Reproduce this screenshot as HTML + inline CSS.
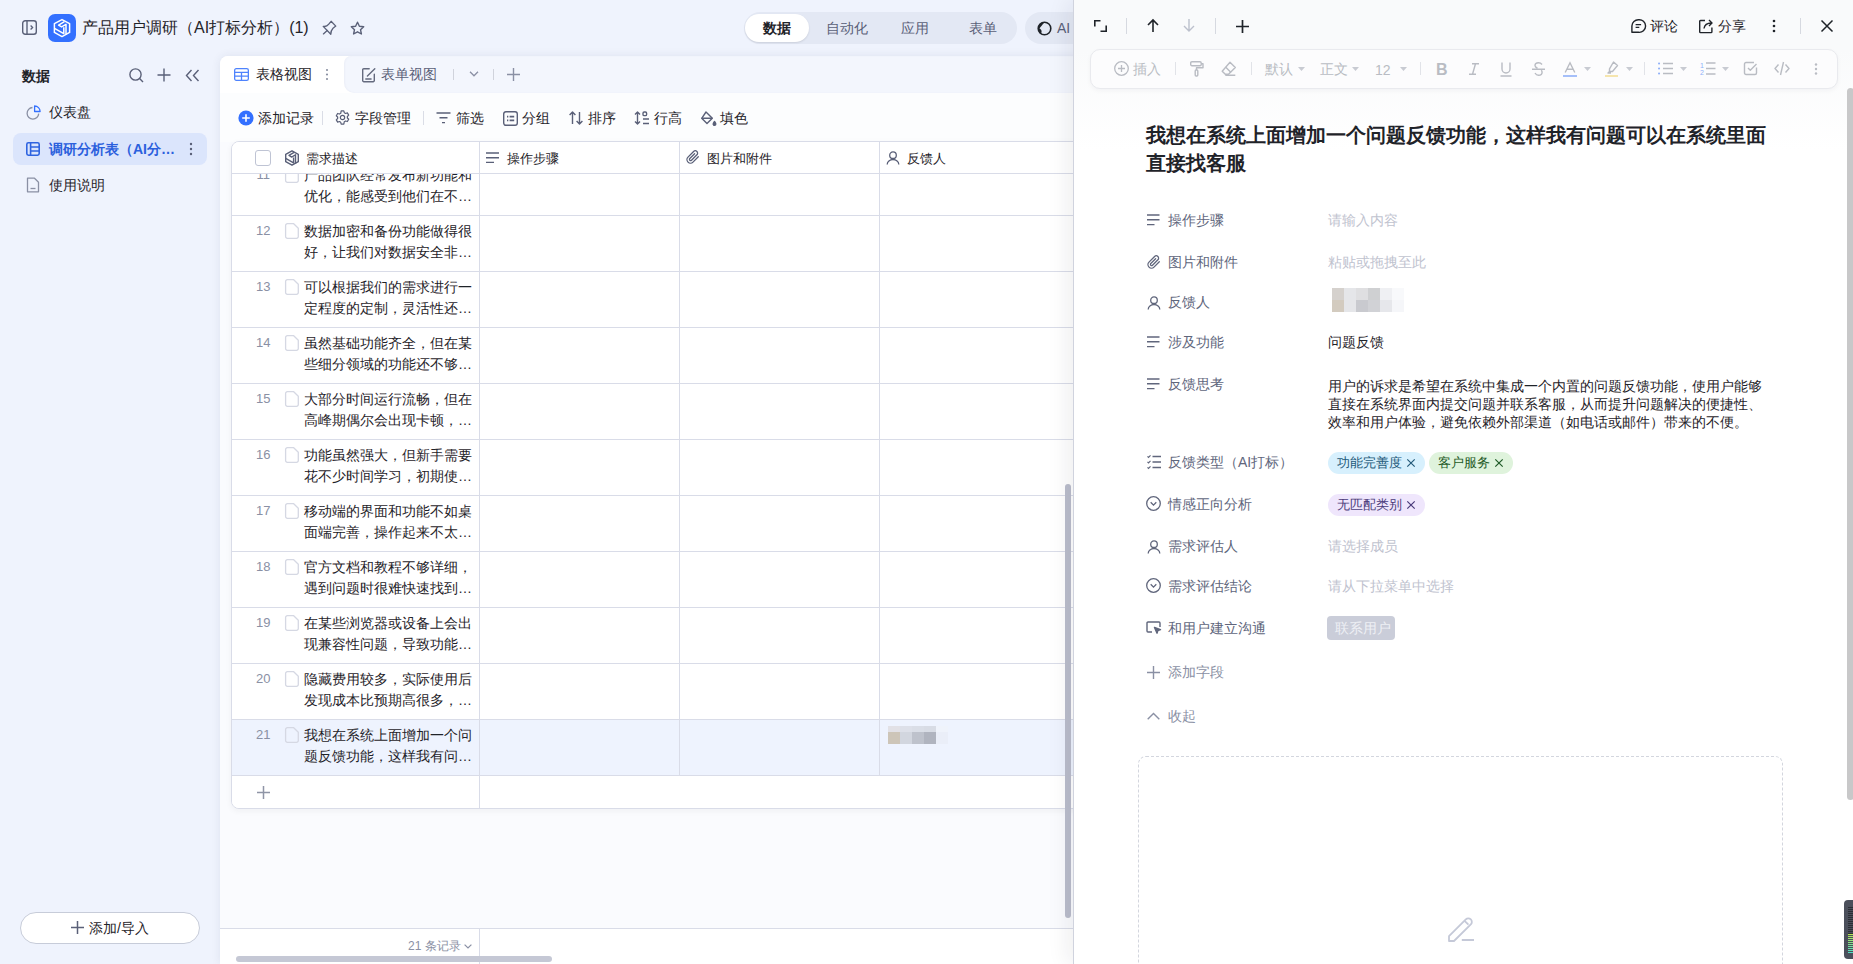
<!DOCTYPE html>
<html><head><meta charset="utf-8">
<style>
*{margin:0;padding:0;box-sizing:border-box}
html,body{width:1853px;height:964px;overflow:hidden}
body{font-family:"Liberation Sans",sans-serif;background:#eff3fd;color:#1f2329;position:relative;font-size:14px}
.a{position:absolute}
svg{position:absolute;overflow:visible}
.t{position:absolute;white-space:nowrap;line-height:1}
i{font-style:normal;display:inline-block;width:1em}
</style></head><body>

<!-- ================= TOP BAR ================= -->
<svg style="left:22px;top:20px" width="15" height="15" viewBox="0 0 15 15" fill="none" stroke="#5a6078" stroke-width="1.4"><rect x="0.7" y="0.7" width="13.6" height="13.6" rx="2.5"/><line x1="5" y1="1" x2="5" y2="14"/><path d="M8.6 5.5l2 2-2 2" stroke-width="1.3"/></svg>
<div class="a" style="left:48px;top:14px;width:28px;height:28px;border-radius:7px;background:#3370ff"></div>
<svg style="left:54px;top:19px" width="16" height="18" viewBox="0 0 16 18" fill="none" stroke="#fff" stroke-width="1.5" stroke-linejoin="round"><path d="M8 .6L15.6 4.6V13.4L8 17.6.4 13.4V4.6z"/><path d="M10.4 2.6L4.6 6.1 7.6 7.9 12 5.3V15.8"/><path d="M.5 9.4L9.8 14.6V8.3"/></svg>
<div class="t" style="left:82px;top:20px;font-size:16px;color:#1f2329"><i>产</i><i>品</i><i>用</i><i>户</i><i>调</i><i>研</i><i>（</i>AI<i>打</i><i>标</i><i>分</i><i>析</i><i>）</i>(1)</div>
<svg style="left:322px;top:20px" width="15" height="16" viewBox="0 0 15 16" fill="none" stroke="#5a6078" stroke-width="1.3" stroke-linejoin="round" stroke-linecap="round"><path d="M1.2 6.4Q4.6 7 6.8 4.2L9.1 1.3 13.8 6.1 11 8.2Q8.6 10.8 8.8 14.3z"/><path d="M5.2 10.4L1.4 13.9"/></svg>
<svg style="left:349.5px;top:20.5px" width="15" height="15" viewBox="0 0 15 15" fill="none" stroke="#5a6078" stroke-width="1.4" stroke-linejoin="round"><path d="M7.5 1.2l1.9 4 4.3.5-3.2 3 .9 4.3-3.9-2.2-3.9 2.2.9-4.3-3.2-3 4.3-.5z"/></svg>

<!-- segmented -->
<div class="a" style="left:744px;top:12px;width:273px;height:32px;border-radius:16px;background:#e3e8f4"></div>
<div class="a" style="left:745px;top:14px;width:64px;height:28px;border-radius:14px;background:#fff;box-shadow:0 1px 2px rgba(31,35,41,.12)"></div>
<div class="t" style="left:763px;top:21px;font-size:14px;font-weight:bold;color:#1f2329"><i>数</i><i>据</i></div>
<div class="t" style="left:826px;top:21px;font-size:14px;color:#5a6078"><i>自</i><i>动</i><i>化</i></div>
<div class="t" style="left:901px;top:21px;font-size:14px;color:#5a6078"><i>应</i><i>用</i></div>
<div class="t" style="left:969px;top:21px;font-size:14px;color:#5a6078"><i>表</i><i>单</i></div>
<div class="a" style="left:1025px;top:12px;width:80px;height:32px;border-radius:16px;background:#e3e8f4"></div>
<svg style="left:1037px;top:21px" width="15" height="15" viewBox="0 0 15 15"><circle cx="7.5" cy="7.5" r="6.3" fill="none" stroke="#1f2329" stroke-width="1.6"/><path d="M7.5 1.2A6.3 6.3 0 0 0 4 12.7C5.5 10 4 8 2.5 7.5 3.5 6 5 4 7.5 1.2z" fill="#1f2329"/></svg>
<div class="t" style="left:1057px;top:21px;font-size:14px;color:#5a6078">AI</div>

<!-- ================= SIDEBAR ================= -->

<div class="t" style="left:22px;top:69px;font-size:14px;font-weight:bold;color:#1f2329"><i>数</i><i>据</i></div>
<svg style="left:129px;top:68px" width="15" height="15" viewBox="0 0 15 15" fill="none" stroke="#5a6078" stroke-width="1.4"><circle cx="6.5" cy="6.5" r="5.6"/><path d="M10.6 10.6l3.4 3.4"/></svg>
<svg style="left:157px;top:68px" width="14" height="14" viewBox="0 0 14 14" fill="none" stroke="#5a6078" stroke-width="1.4"><path d="M7 0.5v13M0.5 7h13"/></svg>
<svg style="left:185px;top:69px" width="15" height="13" viewBox="0 0 15 13" fill="none" stroke="#5a6078" stroke-width="1.4"><path d="M6.5 1L1.5 6.5l5 5.5M13.5 1l-5 5.5 5 5.5"/></svg>

<svg style="left:26px;top:105px" width="15" height="15" viewBox="0 0 15 15" fill="none" stroke="#8a90a4" stroke-width="1.3" stroke-linejoin="round"><path d="M6.5 2.5A5.8 5.8 0 1 0 12.7 8.6"/><path d="M8.6 1v5.5h5.5A5.5 5.5 0 0 0 8.6 1z" stroke="#3370ff"/></svg>
<div class="t" style="left:49px;top:105px;font-size:14px;color:#1f2329"><i>仪</i><i>表</i><i>盘</i></div>

<div class="a" style="left:13px;top:133px;width:194px;height:32px;border-radius:8px;background:#dbe5fc"></div>
<svg style="left:26px;top:142px" width="14" height="14" viewBox="0 0 14 14" fill="none" stroke="#2f64e0" stroke-width="1.6" stroke-linejoin="round"><rect x="0.8" y="0.8" width="12.4" height="12.4" rx="1.6"/><path d="M4.6 1v12M4.6 5h8.4M4.6 9h8.4"/></svg>
<div class="t" style="left:49px;top:142px;font-size:14px;font-weight:bold;color:#2b60dd"><i>调</i><i>研</i><i>分</i><i>析</i><i>表</i><i>（</i>AI<i>分</i>…</div>
<svg style="left:189px;top:142px" width="4" height="14" viewBox="0 0 4 14" fill="#5a6078"><circle cx="2" cy="2" r="1.2"/><circle cx="2" cy="7" r="1.2"/><circle cx="2" cy="12" r="1.2"/></svg>

<svg style="left:26px;top:177px" width="14" height="16" viewBox="0 0 14 16" fill="none" stroke="#8a90a4" stroke-width="1.3" stroke-linejoin="round"><path d="M1.5 1.2h7l4 4v9.6h-11z"/><path d="M4.5 11.5h5"/></svg>
<div class="t" style="left:49px;top:178px;font-size:14px;color:#1f2329"><i>使</i><i>用</i><i>说</i><i>明</i></div>

<div class="a" style="left:20px;top:912px;width:180px;height:32px;border-radius:16px;background:#fff;border:1px solid #c7ccd9"></div>
<svg style="left:71px;top:921px" width="13" height="13" viewBox="0 0 13 13" fill="none" stroke="#5a6078" stroke-width="1.5"><path d="M6.5 0v13M0 6.5h13"/></svg>
<div class="t" style="left:89px;top:921px;font-size:14px;color:#1f2329"><i>添</i><i>加</i>/<i>导</i><i>入</i></div>

<div id="main" class="a" style="left:220px;top:56px;width:900px;height:908px;background:#fafbfe;border-top-left-radius:8px;overflow:hidden;box-shadow:0 0 10px rgba(40,50,90,.09)">
<div class="a" style="left:0;top:36px;width:900px;height:50px;background:#fcfdfe"></div>
<div class="a" style="left:0;top:0;width:900px;height:37px;background:#fff"></div>
<div class="a" style="left:124px;top:0;width:800px;height:37px;background:#f3f6fd;border-radius:7px 0 0 10px;box-shadow:inset 1px 0 2px rgba(40,50,90,.04)"></div>
<svg style="left:14px;top:12px" width="15" height="13" viewBox="0 0 15 13" fill="none" stroke="#4e83fd" stroke-width="1.3"><rect x="0.65" y="0.65" width="13.7" height="11.7" rx="1.6"/><path d="M1 4.4h13M1 8.2h13M7.5 4.4v8"/></svg>
<div class="t" style="left:36px;top:11px;font-size:14px;color:#1f2329"><i>表</i><i>格</i><i>视</i><i>图</i></div>
<svg style="left:105px;top:12px" width="4" height="13" viewBox="0 0 4 13" fill="#8a90a2"><circle cx="2" cy="2" r="1.1"/><circle cx="2" cy="6.5" r="1.1"/><circle cx="2" cy="11" r="1.1"/></svg>
<svg style="left:141.5px;top:11.5px" width="14" height="15" viewBox="0 0 14 15" fill="none" stroke="#646a7e" stroke-width="1.4" stroke-linejoin="round" stroke-linecap="round"><path d="M7.2 .7H1.8a1.1 1.1 0 0 0-1.1 1.1v10.8a1.1 1.1 0 0 0 1.1 1.1h9.4a1.1 1.1 0 0 0 1.1-1.1V6.2"/><path d="M12.8.7L5.4 8.1M3.8 11h5.3"/></svg>
<div class="t" style="left:161px;top:11px;font-size:14px;color:#5a6078"><i>表</i><i>单</i><i>视</i><i>图</i></div>
<div class="a" style="left:233px;top:13px;width:1px;height:11px;background:#d0d3dc"></div>
<svg style="left:249px;top:15px" width="10" height="6" viewBox="0 0 10 6" fill="none" stroke="#8a90a4" stroke-width="1.3"><path d="M1 .8l4 4 4-4"/></svg>
<div class="a" style="left:273px;top:13px;width:1px;height:11px;background:#d0d3dc"></div>
<svg style="left:287px;top:12px" width="13" height="13" viewBox="0 0 13 13" fill="none" stroke="#8a90a4" stroke-width="1.4"><path d="M6.5 0v13M0 6.5h13"/></svg>
<svg style="left:18px;top:54px" width="16" height="16" viewBox="0 0 16 16"><circle cx="8" cy="8" r="7.6" fill="#3370ff"/><path d="M8 4.2v7.6M4.2 8h7.6" stroke="#fff" stroke-width="1.6"/></svg>
<div class="t" style="left:38px;top:55px;font-size:14px;color:#1f2329"><i>添</i><i>加</i><i>记</i><i>录</i></div>
<div class="a" style="left:102px;top:55px;width:1px;height:14px;background:#dadde6"></div>
<svg style="left:115px;top:54px" width="15" height="15" viewBox="0 0 16 16" fill="none" stroke="#5a6078" stroke-width="1.3" stroke-linejoin="round"><path d="M6.6 1h2.8l.5 1.9 1.4.8 1.9-.6 1.4 2.4-1.4 1.4v1.6l1.4 1.4-1.4 2.4-1.9-.6-1.4.8L9.4 15H6.6l-.5-1.9-1.4-.8-1.9.6L1.4 10.5l1.4-1.4V7.5L1.4 6.1l1.4-2.4 1.9.6 1.4-.8z"/><circle cx="8" cy="8" r="2.3"/></svg>
<div class="t" style="left:135px;top:55px;font-size:14px;color:#1f2329"><i>字</i><i>段</i><i>管</i><i>理</i></div>
<div class="a" style="left:203px;top:55px;width:1px;height:14px;background:#dadde6"></div>
<svg style="left:216px;top:56px" width="15" height="12" viewBox="0 0 15 12" fill="none" stroke="#5a6078" stroke-width="1.4"><path d="M.5 1h14M3.5 5.8h8M6 10.6h3"/></svg>
<div class="t" style="left:236px;top:55px;font-size:14px;color:#1f2329"><i>筛</i><i>选</i></div>
<svg style="left:282.5px;top:54.5px" width="15" height="15" viewBox="0 0 15 15" fill="none" stroke="#5a6078" stroke-width="1.4"><rect x="0.7" y="0.7" width="13.6" height="13.6" rx="2.2"/><path d="M4 5.6h1.3M6.6 5.6h4.6M4 9.4h1.3M6.6 9.4h4.6" stroke-width="1.6"/></svg>
<div class="t" style="left:302px;top:55px;font-size:14px;color:#1f2329"><i>分</i><i>组</i></div>
<svg style="left:349px;top:55px" width="14" height="14" viewBox="0 0 14 14" fill="none" stroke="#5a6078" stroke-width="1.4" stroke-linejoin="round"><path d="M3.5 13V1M.6 4l2.9-3 2.9 3M10.5 1v12M7.6 10l2.9 3 2.9-3"/></svg>
<div class="t" style="left:368px;top:55px;font-size:14px;color:#1f2329"><i>排</i><i>序</i></div>
<svg style="left:414px;top:55px" width="16" height="14" viewBox="0 0 16 14" fill="none" stroke="#5a6078" stroke-width="1.4" stroke-linejoin="round"><path d="M3.5 1v12M1 3.5L3.5 1 6 3.5M1 10.5L3.5 13 6 10.5"/><rect x="9" y="1" width="3.6" height="3.6" rx="1.2"/><path d="M9 8h6M9 12.5h6"/></svg>
<div class="t" style="left:434px;top:55px;font-size:14px;color:#1f2329"><i>行</i><i>高</i></div>
<svg style="left:480px;top:55px" width="17" height="15" viewBox="0 0 17 15" fill="none" stroke="#5a6078" stroke-width="1.4" stroke-linejoin="round"><path d="M6 1l6.3 6.3-5.3 5.3L1.7 7.3z"/><path d="M1.7 7.3h10.6"/><path d="M14.5 10.5c.9 1.2 1.3 2 1.3 2.6a1.3 1.3 0 0 1-2.6 0c0-.6.4-1.4 1.3-2.6z" fill="#5a6078"/></svg>
<div class="t" style="left:500px;top:55px;font-size:14px;color:#1f2329"><i>填</i><i>色</i></div>
<div class="a" style="left:11px;top:85px;width:1000px;height:668px;background:#fff;border:1px solid #d9dce8;border-radius:8px;box-shadow:0 2px 6px rgba(31,35,41,.05);overflow:hidden">
<div class="a" style="left:0;top:18px;width:1000px;height:56px;background:#fff;border-bottom:1px solid #d9dce8"></div>
<div class="t" style="left:24px;top:26px;width:14px;text-align:right;font-size:13px;color:#8a90a4">11</div>
<svg style="left:53px;top:25px" width="14" height="16" viewBox="0 0 14 16" fill="none" stroke="#d5d8e3" stroke-width="1.3" stroke-linejoin="round"><path d="M2.4 .7h6.3l4.6 4.6v8.2a1.8 1.8 0 0 1-1.8 1.8H2.4A1.8 1.8 0 0 1 .6 13.5V2.5A1.8 1.8 0 0 1 2.4.7z"/></svg>
<div class="a" style="left:72px;top:23px;font-size:14px;line-height:21px;color:#1f2329;white-space:nowrap"><i>产</i><i>品</i><i>团</i><i>队</i><i>经</i><i>常</i><i>发</i><i>布</i><i>新</i><i>功</i><i>能</i><i>和</i><br><i>优</i><i>化</i><i>，</i><i>能</i><i>感</i><i>受</i><i>到</i><i>他</i><i>们</i><i>在</i><i>不</i>…</div>
<div class="a" style="left:0;top:74px;width:1000px;height:56px;background:#fff;border-bottom:1px solid #d9dce8"></div>
<div class="t" style="left:24px;top:82px;width:14px;text-align:right;font-size:13px;color:#8a90a4">12</div>
<svg style="left:53px;top:81px" width="14" height="16" viewBox="0 0 14 16" fill="none" stroke="#d5d8e3" stroke-width="1.3" stroke-linejoin="round"><path d="M2.4 .7h6.3l4.6 4.6v8.2a1.8 1.8 0 0 1-1.8 1.8H2.4A1.8 1.8 0 0 1 .6 13.5V2.5A1.8 1.8 0 0 1 2.4.7z"/></svg>
<div class="a" style="left:72px;top:79px;font-size:14px;line-height:21px;color:#1f2329;white-space:nowrap"><i>数</i><i>据</i><i>加</i><i>密</i><i>和</i><i>备</i><i>份</i><i>功</i><i>能</i><i>做</i><i>得</i><i>很</i><br><i>好</i><i>，</i><i>让</i><i>我</i><i>们</i><i>对</i><i>数</i><i>据</i><i>安</i><i>全</i><i>非</i>…</div>
<div class="a" style="left:0;top:130px;width:1000px;height:56px;background:#fff;border-bottom:1px solid #d9dce8"></div>
<div class="t" style="left:24px;top:138px;width:14px;text-align:right;font-size:13px;color:#8a90a4">13</div>
<svg style="left:53px;top:137px" width="14" height="16" viewBox="0 0 14 16" fill="none" stroke="#d5d8e3" stroke-width="1.3" stroke-linejoin="round"><path d="M2.4 .7h6.3l4.6 4.6v8.2a1.8 1.8 0 0 1-1.8 1.8H2.4A1.8 1.8 0 0 1 .6 13.5V2.5A1.8 1.8 0 0 1 2.4.7z"/></svg>
<div class="a" style="left:72px;top:135px;font-size:14px;line-height:21px;color:#1f2329;white-space:nowrap"><i>可</i><i>以</i><i>根</i><i>据</i><i>我</i><i>们</i><i>的</i><i>需</i><i>求</i><i>进</i><i>行</i><i>一</i><br><i>定</i><i>程</i><i>度</i><i>的</i><i>定</i><i>制</i><i>，</i><i>灵</i><i>活</i><i>性</i><i>还</i>…</div>
<div class="a" style="left:0;top:186px;width:1000px;height:56px;background:#fff;border-bottom:1px solid #d9dce8"></div>
<div class="t" style="left:24px;top:194px;width:14px;text-align:right;font-size:13px;color:#8a90a4">14</div>
<svg style="left:53px;top:193px" width="14" height="16" viewBox="0 0 14 16" fill="none" stroke="#d5d8e3" stroke-width="1.3" stroke-linejoin="round"><path d="M2.4 .7h6.3l4.6 4.6v8.2a1.8 1.8 0 0 1-1.8 1.8H2.4A1.8 1.8 0 0 1 .6 13.5V2.5A1.8 1.8 0 0 1 2.4.7z"/></svg>
<div class="a" style="left:72px;top:191px;font-size:14px;line-height:21px;color:#1f2329;white-space:nowrap"><i>虽</i><i>然</i><i>基</i><i>础</i><i>功</i><i>能</i><i>齐</i><i>全</i><i>，</i><i>但</i><i>在</i><i>某</i><br><i>些</i><i>细</i><i>分</i><i>领</i><i>域</i><i>的</i><i>功</i><i>能</i><i>还</i><i>不</i><i>够</i>…</div>
<div class="a" style="left:0;top:242px;width:1000px;height:56px;background:#fff;border-bottom:1px solid #d9dce8"></div>
<div class="t" style="left:24px;top:250px;width:14px;text-align:right;font-size:13px;color:#8a90a4">15</div>
<svg style="left:53px;top:249px" width="14" height="16" viewBox="0 0 14 16" fill="none" stroke="#d5d8e3" stroke-width="1.3" stroke-linejoin="round"><path d="M2.4 .7h6.3l4.6 4.6v8.2a1.8 1.8 0 0 1-1.8 1.8H2.4A1.8 1.8 0 0 1 .6 13.5V2.5A1.8 1.8 0 0 1 2.4.7z"/></svg>
<div class="a" style="left:72px;top:247px;font-size:14px;line-height:21px;color:#1f2329;white-space:nowrap"><i>大</i><i>部</i><i>分</i><i>时</i><i>间</i><i>运</i><i>行</i><i>流</i><i>畅</i><i>，</i><i>但</i><i>在</i><br><i>高</i><i>峰</i><i>期</i><i>偶</i><i>尔</i><i>会</i><i>出</i><i>现</i><i>卡</i><i>顿</i><i>，</i>…</div>
<div class="a" style="left:0;top:298px;width:1000px;height:56px;background:#fff;border-bottom:1px solid #d9dce8"></div>
<div class="t" style="left:24px;top:306px;width:14px;text-align:right;font-size:13px;color:#8a90a4">16</div>
<svg style="left:53px;top:305px" width="14" height="16" viewBox="0 0 14 16" fill="none" stroke="#d5d8e3" stroke-width="1.3" stroke-linejoin="round"><path d="M2.4 .7h6.3l4.6 4.6v8.2a1.8 1.8 0 0 1-1.8 1.8H2.4A1.8 1.8 0 0 1 .6 13.5V2.5A1.8 1.8 0 0 1 2.4.7z"/></svg>
<div class="a" style="left:72px;top:303px;font-size:14px;line-height:21px;color:#1f2329;white-space:nowrap"><i>功</i><i>能</i><i>虽</i><i>然</i><i>强</i><i>大</i><i>，</i><i>但</i><i>新</i><i>手</i><i>需</i><i>要</i><br><i>花</i><i>不</i><i>少</i><i>时</i><i>间</i><i>学</i><i>习</i><i>，</i><i>初</i><i>期</i><i>使</i>…</div>
<div class="a" style="left:0;top:354px;width:1000px;height:56px;background:#fff;border-bottom:1px solid #d9dce8"></div>
<div class="t" style="left:24px;top:362px;width:14px;text-align:right;font-size:13px;color:#8a90a4">17</div>
<svg style="left:53px;top:361px" width="14" height="16" viewBox="0 0 14 16" fill="none" stroke="#d5d8e3" stroke-width="1.3" stroke-linejoin="round"><path d="M2.4 .7h6.3l4.6 4.6v8.2a1.8 1.8 0 0 1-1.8 1.8H2.4A1.8 1.8 0 0 1 .6 13.5V2.5A1.8 1.8 0 0 1 2.4.7z"/></svg>
<div class="a" style="left:72px;top:359px;font-size:14px;line-height:21px;color:#1f2329;white-space:nowrap"><i>移</i><i>动</i><i>端</i><i>的</i><i>界</i><i>面</i><i>和</i><i>功</i><i>能</i><i>不</i><i>如</i><i>桌</i><br><i>面</i><i>端</i><i>完</i><i>善</i><i>，</i><i>操</i><i>作</i><i>起</i><i>来</i><i>不</i><i>太</i>…</div>
<div class="a" style="left:0;top:410px;width:1000px;height:56px;background:#fff;border-bottom:1px solid #d9dce8"></div>
<div class="t" style="left:24px;top:418px;width:14px;text-align:right;font-size:13px;color:#8a90a4">18</div>
<svg style="left:53px;top:417px" width="14" height="16" viewBox="0 0 14 16" fill="none" stroke="#d5d8e3" stroke-width="1.3" stroke-linejoin="round"><path d="M2.4 .7h6.3l4.6 4.6v8.2a1.8 1.8 0 0 1-1.8 1.8H2.4A1.8 1.8 0 0 1 .6 13.5V2.5A1.8 1.8 0 0 1 2.4.7z"/></svg>
<div class="a" style="left:72px;top:415px;font-size:14px;line-height:21px;color:#1f2329;white-space:nowrap"><i>官</i><i>方</i><i>文</i><i>档</i><i>和</i><i>教</i><i>程</i><i>不</i><i>够</i><i>详</i><i>细</i><i>，</i><br><i>遇</i><i>到</i><i>问</i><i>题</i><i>时</i><i>很</i><i>难</i><i>快</i><i>速</i><i>找</i><i>到</i>…</div>
<div class="a" style="left:0;top:466px;width:1000px;height:56px;background:#fff;border-bottom:1px solid #d9dce8"></div>
<div class="t" style="left:24px;top:474px;width:14px;text-align:right;font-size:13px;color:#8a90a4">19</div>
<svg style="left:53px;top:473px" width="14" height="16" viewBox="0 0 14 16" fill="none" stroke="#d5d8e3" stroke-width="1.3" stroke-linejoin="round"><path d="M2.4 .7h6.3l4.6 4.6v8.2a1.8 1.8 0 0 1-1.8 1.8H2.4A1.8 1.8 0 0 1 .6 13.5V2.5A1.8 1.8 0 0 1 2.4.7z"/></svg>
<div class="a" style="left:72px;top:471px;font-size:14px;line-height:21px;color:#1f2329;white-space:nowrap"><i>在</i><i>某</i><i>些</i><i>浏</i><i>览</i><i>器</i><i>或</i><i>设</i><i>备</i><i>上</i><i>会</i><i>出</i><br><i>现</i><i>兼</i><i>容</i><i>性</i><i>问</i><i>题</i><i>，</i><i>导</i><i>致</i><i>功</i><i>能</i>…</div>
<div class="a" style="left:0;top:522px;width:1000px;height:56px;background:#fff;border-bottom:1px solid #d9dce8"></div>
<div class="t" style="left:24px;top:530px;width:14px;text-align:right;font-size:13px;color:#8a90a4">20</div>
<svg style="left:53px;top:529px" width="14" height="16" viewBox="0 0 14 16" fill="none" stroke="#d5d8e3" stroke-width="1.3" stroke-linejoin="round"><path d="M2.4 .7h6.3l4.6 4.6v8.2a1.8 1.8 0 0 1-1.8 1.8H2.4A1.8 1.8 0 0 1 .6 13.5V2.5A1.8 1.8 0 0 1 2.4.7z"/></svg>
<div class="a" style="left:72px;top:527px;font-size:14px;line-height:21px;color:#1f2329;white-space:nowrap"><i>隐</i><i>藏</i><i>费</i><i>用</i><i>较</i><i>多</i><i>，</i><i>实</i><i>际</i><i>使</i><i>用</i><i>后</i><br><i>发</i><i>现</i><i>成</i><i>本</i><i>比</i><i>预</i><i>期</i><i>高</i><i>很</i><i>多</i><i>，</i>…</div>
<div class="a" style="left:0;top:578px;width:1000px;height:56px;background:#eef3fe;border-bottom:1px solid #d9dce8"></div>
<div class="t" style="left:24px;top:586px;width:14px;text-align:right;font-size:13px;color:#8a90a4">21</div>
<svg style="left:53px;top:585px" width="14" height="16" viewBox="0 0 14 16" fill="none" stroke="#d5d8e3" stroke-width="1.3" stroke-linejoin="round"><path d="M2.4 .7h6.3l4.6 4.6v8.2a1.8 1.8 0 0 1-1.8 1.8H2.4A1.8 1.8 0 0 1 .6 13.5V2.5A1.8 1.8 0 0 1 2.4.7z"/></svg>
<div class="a" style="left:72px;top:583px;font-size:14px;line-height:21px;color:#1f2329;white-space:nowrap"><i>我</i><i>想</i><i>在</i><i>系</i><i>统</i><i>上</i><i>面</i><i>增</i><i>加</i><i>一</i><i>个</i><i>问</i><br><i>题</i><i>反</i><i>馈</i><i>功</i><i>能</i><i>，</i><i>这</i><i>样</i><i>我</i><i>有</i><i>问</i>…</div>
<div class="a" style="left:0;top:634px;width:1000px;height:33px;background:#fff"></div>
<svg style="left:25px;top:644px" width="13" height="13" viewBox="0 0 13 13" fill="none" stroke="#8f95a6" stroke-width="1.5"><path d="M6.5 0v13M0 6.5h13"/></svg>
<div class="a" style="left:0;top:0;width:1000px;height:32px;background:#fff;border-bottom:1px solid #d9dce8"></div>
<div class="a" style="left:23px;top:8px;width:16px;height:16px;border:1px solid #bfc4d4;border-radius:3px;background:#fff"></div>
<svg style="left:53px;top:8px" width="14" height="16" viewBox="0 0 16 18" fill="none" stroke="#5a6078" stroke-width="1.6" stroke-linejoin="round"><path d="M8 .8L15.2 4.8V13.2L8 17.2.8 13.2V4.8z"/><path d="M10.4 2.6L4.6 6.1 7.6 7.9 12 5.3V15.5"/><path d="M.8 9.4L9.8 14.6V8.3"/></svg>
<div class="t" style="left:74px;top:10px;font-size:13px;color:#1f2329"><i>需</i><i>求</i><i>描</i><i>述</i></div>
<svg style="left:254px;top:10px" width="14" height="12" viewBox="0 0 14 12" fill="none" stroke="#5a6078" stroke-width="1.4"><path d="M0 1h13M0 5.7h13M0 10.4h8"/></svg>
<div class="t" style="left:275px;top:10px;font-size:13px;color:#1f2329"><i>操</i><i>作</i><i>步</i><i>骤</i></div>
<svg style="left:454px;top:8px" width="14" height="15" viewBox="0 0 14 15" fill="none" stroke="#5a6078" stroke-width="1.3" stroke-linecap="round"><path d="M12.3 6.8L7 12.1a3.5 3.5 0 0 1-5-5L7.6 1.5a2.3 2.3 0 0 1 3.3 3.3L5.5 10.2a1.2 1.2 0 0 1-1.7-1.7L8.6 3.7"/></svg>
<div class="t" style="left:475px;top:10px;font-size:13px;color:#1f2329"><i>图</i><i>片</i><i>和</i><i>附</i><i>件</i></div>
<svg style="left:654px;top:8px" width="14" height="15" viewBox="0 0 14 15" fill="none" stroke="#5a6078" stroke-width="1.3"><circle cx="7" cy="5.2" r="3.3"/><path d="M1.2 14.4a5.8 4.9 0 0 1 11.6 0"/></svg>
<div class="t" style="left:675px;top:10px;font-size:13px;color:#1f2329"><i>反</i><i>馈</i><i>人</i></div>
<div class="a" style="left:247px;top:0;width:1px;height:634px;background:#d9dce8"></div>
<div class="a" style="left:447px;top:0;width:1px;height:634px;background:#d9dce8"></div>
<div class="a" style="left:647px;top:0;width:1px;height:634px;background:#d9dce8"></div>
<div class="a" style="left:247px;top:634px;width:1px;height:33px;background:#d9dce8"></div>
<div class="a" style="left:656px;top:584px;width:12px;height:6px;background:#e2e1e6"></div>
<div class="a" style="left:668px;top:584px;width:12px;height:6px;background:#dde0e9"></div>
<div class="a" style="left:680px;top:584px;width:12px;height:6px;background:#dadee7"></div>
<div class="a" style="left:692px;top:584px;width:12px;height:6px;background:#d8dce5"></div>
<div class="a" style="left:704px;top:584px;width:12px;height:6px;background:#eff3fb"></div>
<div class="a" style="left:656px;top:590px;width:12px;height:12px;background:#cdc5b8"></div>
<div class="a" style="left:668px;top:590px;width:12px;height:12px;background:#d2d6df"></div>
<div class="a" style="left:680px;top:590px;width:12px;height:12px;background:#bec2cc"></div>
<div class="a" style="left:692px;top:590px;width:12px;height:12px;background:#b0b4bf"></div>
<div class="a" style="left:704px;top:590px;width:12px;height:12px;background:#eaeef8"></div>
</div>
<div class="a" style="left:0;top:872px;width:900px;height:40px;background:#fff;border-top:1px solid #d9dce8"></div>
<div class="a" style="left:259px;top:872px;width:1px;height:40px;background:#d9dce8"></div>
<div class="t" style="left:188px;top:884px;font-size:12px;color:#8a90a4">21 <i>条</i><i>记</i><i>录</i></div>
<svg style="left:244px;top:888px" width="8" height="5" viewBox="0 0 8 5" fill="none" stroke="#8a90a4" stroke-width="1.2"><path d="M.6.6l3.4 3.4L7.4.6"/></svg>
<div class="a" style="left:16px;top:900px;width:316px;height:6px;border-radius:3px;background:#c5c8d5"></div>
<div class="a" style="left:845px;top:428px;width:6px;height:434px;border-radius:3px;background:#babdcc"></div>
</div>
<div id="panel" class="a" style="left:1073px;top:0;width:780px;height:964px;background:#fff;border-left:1px solid #d0d3de;box-shadow:-6px 0 20px rgba(31,35,41,.07)">
<div class="a" style="left:0;top:0;width:780px;height:150px;background:linear-gradient(#f9fafb 0,#f9fafb 50px,#fff 150px)"></div>
<svg style="left:20px;top:20px" width="13" height="12" viewBox="0 0 13 12" fill="none" stroke="#1f2329" stroke-width="1.6"><path d="M.8 6.5V.8H6.5M12.2 5.5v5.7H6.5"/></svg>
<div class="a" style="left:52px;top:18px;width:1px;height:16px;background:#d6d9e0"></div>
<svg style="left:73px;top:19px" width="12" height="13" viewBox="0 0 12 13" fill="none" stroke="#1f2329" stroke-width="1.6"><path d="M6 13V1.2M1 6l5-5 5 5"/></svg>
<svg style="left:109px;top:19px" width="12" height="13" viewBox="0 0 12 13" fill="none" stroke="#bcc0cc" stroke-width="1.4"><path d="M6 0v11.8M1 7l5 5 5-5"/></svg>
<div class="a" style="left:141px;top:18px;width:1px;height:16px;background:#d6d9e0"></div>
<svg style="left:162px;top:20px" width="13" height="13" viewBox="0 0 13 13" fill="none" stroke="#1f2329" stroke-width="1.7"><path d="M6.5 0v13M0 6.5h13"/></svg>
<svg style="left:557px;top:19px" width="15" height="14" viewBox="0 0 15 14" fill="none" stroke="#1f2329" stroke-width="1.4" stroke-linejoin="round"><path d="M7.5 .8a6.3 6.3 0 1 1 0 12.5H.9V7A6.4 6.4 0 0 1 7.5.8z"/><path d="M4.6 5.6h5.5M4.6 8.4h3.7"/></svg>
<div class="t" style="left:576px;top:19px;font-size:14px;color:#1f2329"><i>评</i><i>论</i></div>
<svg style="left:625px;top:19px" width="15" height="14" viewBox="0 0 15 14" fill="none" stroke="#1f2329" stroke-width="1.4" stroke-linejoin="round"><path d="M6 1.5H1.5a.8.8 0 0 0-.8.8v10.5a.8.8 0 0 0 .8.8h10.6a.8.8 0 0 0 .8-.8V8.5"/><path d="M5 9.5C5.5 6 8 4 12.5 4M10 1l3 3-3 3"/></svg>
<div class="t" style="left:644px;top:19px;font-size:14px;color:#1f2329"><i>分</i><i>享</i></div>
<svg style="left:698px;top:19px" width="4" height="14" viewBox="0 0 4 14" fill="#1f2329"><circle cx="2" cy="2" r="1.3"/><circle cx="2" cy="7" r="1.3"/><circle cx="2" cy="12" r="1.3"/></svg>
<div class="a" style="left:726px;top:18px;width:1px;height:16px;background:#d6d9e0"></div>
<svg style="left:747px;top:20px" width="12" height="12" viewBox="0 0 12 12" fill="none" stroke="#1f2329" stroke-width="1.5"><path d="M.5.5l11 11M11.5.5l-11 11"/></svg>
<div class="a" style="left:16px;top:49px;width:748px;height:40px;border-radius:10px;background:#fcfcfd;border:1px solid #e9eaee;box-shadow:0 2px 5px rgba(31,35,41,.04)"></div>
<svg style="left:40px;top:61px" width="15" height="15" viewBox="0 0 15 15" fill="none" stroke="#b9bcc3" stroke-width="1.3"><circle cx="7.5" cy="7.5" r="6.8"/><path d="M7.5 4v7M4 7.5h7"/></svg>
<div class="t" style="left:59px;top:62px;font-size:14px;color:#b9bcc3"><i>插</i><i>入</i></div>
<div class="a" style="left:101px;top:62px;width:1px;height:13px;background:#e1e3e8"></div>
<svg style="left:116px;top:61px" width="14" height="16" viewBox="0 0 14 16" fill="none" stroke="#b9bcc3" stroke-width="1.4" stroke-linejoin="round"><rect x=".7" y=".7" width="10.5" height="4" rx="1.2"/><path d="M11.2 2.7h1.8v4H6.5v2.2"/><rect x="5.2" y="9" width="2.6" height="6" rx="1"/></svg>
<svg style="left:147px;top:61px" width="16" height="15" viewBox="0 0 16 15" fill="none" stroke="#b9bcc3" stroke-width="1.4" stroke-linejoin="round"><path d="M9 1.2l5.3 5.3-6.8 6.8H4.3L1.2 10.2z"/><path d="M4.8 6.2l5.2 5.2M4.3 14.2h10"/></svg>
<div class="a" style="left:177px;top:62px;width:1px;height:13px;background:#e1e3e8"></div>
<div class="t" style="left:191px;top:62px;font-size:14px;color:#b9bcc3"><i>默</i><i>认</i></div>
<svg style="left:223.5px;top:67px" width="7" height="4" viewBox="0 0 7 4" fill="#c8cbd2"><path d="M0 0h7L3.5 4z"/></svg>
<div class="t" style="left:245.5px;top:62px;font-size:14px;color:#b9bcc3"><i>正</i><i>文</i></div>
<svg style="left:277.5px;top:67px" width="7" height="4" viewBox="0 0 7 4" fill="#c8cbd2"><path d="M0 0h7L3.5 4z"/></svg>
<div class="t" style="left:301px;top:63px;font-size:14px;color:#b9bcc3">12</div>
<svg style="left:326px;top:67px" width="7" height="4" viewBox="0 0 7 4" fill="#c8cbd2"><path d="M0 0h7L3.5 4z"/></svg>
<div class="a" style="left:346px;top:62px;width:1px;height:13px;background:#e1e3e8"></div>
<div class="t" style="left:362px;top:62px;font-size:16px;font-weight:bold;color:#b9bcc3">B</div>
<svg style="left:395px;top:63px" width="10" height="12" viewBox="0 0 10 12" fill="none" stroke="#b9bcc3" stroke-width="1.4"><path d="M3 .7h7M0 11.3h7M6.5.7L3.5 11.3"/></svg>
<svg style="left:426px;top:62px" width="12" height="15" viewBox="0 0 12 15" fill="none" stroke="#b9bcc3" stroke-width="1.4"><path d="M2 .5v6.5a4 4 0 0 0 8 0V.5M.5 14h11"/></svg>
<svg style="left:458px;top:62px" width="13" height="14" viewBox="0 0 13 14" fill="none" stroke="#b9bcc3" stroke-width="1.4"><path d="M10 2.5C9 1.2 7.8.8 6.5.8 4.5.8 3 2 3 3.6c0 1.2.8 2 2.5 2.6M3 11c.8 1.4 2 2.2 3.6 2.2 2 0 3.5-1.2 3.5-3 0-.8-.3-1.5-.9-2M0 7.3h13"/></svg>
<svg style="left:489px;top:62px" width="14" height="15" viewBox="0 0 14 15" fill="none" stroke-width="1.4"><path d="M2.2 10.5L7 .8l4.8 9.7M3.8 7.3h6.4" stroke="#b9bcc3"/><path d="M0 14h14" stroke="#8fb0f8" stroke-width="1.6"/></svg>
<svg style="left:510px;top:67px" width="7" height="4" viewBox="0 0 7 4" fill="#c8cbd2"><path d="M0 0h7L3.5 4z"/></svg>
<svg style="left:531px;top:61px" width="14" height="16" viewBox="0 0 14 16" fill="none" stroke-width="1.4" stroke-linejoin="round"><path d="M8.5 1l4 3.5-5 6H4.5V7.8z M4.5 10.5l-1.5 1.5h3" stroke="#b9bcc3"/><path d="M0 15h13" stroke="#f3df9a" stroke-width="1.6"/></svg>
<svg style="left:552px;top:67px" width="7" height="4" viewBox="0 0 7 4" fill="#c8cbd2"><path d="M0 0h7L3.5 4z"/></svg>
<div class="a" style="left:570px;top:62px;width:1px;height:13px;background:#e1e3e8"></div>
<svg style="left:584px;top:62px" width="16" height="13" viewBox="0 0 16 13" fill="none" stroke-width="1.5"><path d="M1 1.5h.1M1 6.5h.1M1 11.5h.1" stroke="#8fb0f8" stroke-width="2" stroke-linecap="round"/><path d="M5 1.5h10M5 6.5h10M5 11.5h10" stroke="#b9bcc3"/></svg>
<svg style="left:606px;top:67px" width="7" height="4" viewBox="0 0 7 4" fill="#c8cbd2"><path d="M0 0h7L3.5 4z"/></svg>
<svg style="left:626px;top:61px" width="16" height="15" viewBox="0 0 16 15" fill="none"><text x="0" y="6.5" font-size="7" fill="#8fb0f8" font-family="Liberation Sans">1</text><text x="0" y="14" font-size="7" fill="#8fb0f8" font-family="Liberation Sans">2</text><path d="M6 2h9.5M6 7.5h9.5M6 13h9.5" stroke="#b9bcc3" stroke-width="1.5"/></svg>
<svg style="left:648px;top:67px" width="7" height="4" viewBox="0 0 7 4" fill="#c8cbd2"><path d="M0 0h7L3.5 4z"/></svg>
<svg style="left:669px;top:61px" width="15" height="15" viewBox="0 0 15 15" fill="none" stroke="#b9bcc3" stroke-width="1.4" stroke-linejoin="round"><path d="M13.5 6.5v5.5a1.5 1.5 0 0 1-1.5 1.5H3a1.5 1.5 0 0 1-1.5-1.5V3A1.5 1.5 0 0 1 3 1.5h8"/><path d="M5 7l2.3 2.3L13.5 3"/></svg>
<svg style="left:700px;top:61px" width="16" height="15" viewBox="0 0 16 15" fill="none" stroke="#b9bcc3" stroke-width="1.4" stroke-linejoin="round"><path d="M4.5 3.5L1 7.5l3.5 4M11.5 3.5l3.5 4-3.5 4M9.5 1L6.5 14"/></svg>
<svg style="left:740px;top:63px" width="4" height="12" viewBox="0 0 4 12" fill="#b9bcc3"><circle cx="2" cy="1.5" r="1.2"/><circle cx="2" cy="6" r="1.2"/><circle cx="2" cy="10.5" r="1.2"/></svg>
<div class="a" style="left:72px;top:121px;font-size:20px;line-height:28px;font-weight:bold;color:#1f2329;white-space:nowrap"><i>我</i><i>想</i><i>在</i><i>系</i><i>统</i><i>上</i><i>面</i><i>增</i><i>加</i><i>一</i><i>个</i><i>问</i><i>题</i><i>反</i><i>馈</i><i>功</i><i>能</i><i>，</i><i>这</i><i>样</i><i>我</i><i>有</i><i>问</i><i>题</i><i>可</i><i>以</i><i>在</i><i>系</i><i>统</i><i>里</i><i>面</i><br><i>直</i><i>接</i><i>找</i><i>客</i><i>服</i></div>
<svg style="left:73px;top:214px" width="13" height="12" viewBox="0 0 13 12" fill="none" stroke="#60667c" stroke-width="1.4"><path d="M0 1h12.5M0 5.8h12.5M0 10.6h7.5"/></svg>
<div class="t" style="left:94px;top:213px;font-size:14px;color:#60667c"><i>操</i><i>作</i><i>步</i><i>骤</i></div>
<div class="t" style="left:254px;top:213px;font-size:14px;color:#bfc3cf"><i>请</i><i>输</i><i>入</i><i>内</i><i>容</i></div>
<svg style="left:73px;top:255px" width="14" height="15" viewBox="0 0 14 15" fill="none" stroke="#60667c" stroke-width="1.3" stroke-linecap="round"><path d="M12.3 6.8L7 12.1a3.5 3.5 0 0 1-5-5L7.6 1.5a2.3 2.3 0 0 1 3.3 3.3L5.5 10.2a1.2 1.2 0 0 1-1.7-1.7L8.6 3.7"/></svg>
<div class="t" style="left:94px;top:255px;font-size:14px;color:#60667c"><i>图</i><i>片</i><i>和</i><i>附</i><i>件</i></div>
<div class="t" style="left:254px;top:255px;font-size:14px;color:#bfc3cf"><i>粘</i><i>贴</i><i>或</i><i>拖</i><i>拽</i><i>至</i><i>此</i></div>
<svg style="left:73px;top:295px" width="14" height="15" viewBox="0 0 14 15" fill="none" stroke="#60667c" stroke-width="1.3"><circle cx="7" cy="5.2" r="3.3"/><path d="M1.2 14.4a5.8 4.9 0 0 1 11.6 0"/></svg>
<div class="t" style="left:94px;top:295px;font-size:14px;color:#60667c"><i>反</i><i>馈</i><i>人</i></div>
<div class="a" style="left:258px;top:288px;width:12px;height:12px;background:#d5d1cd"></div>
<div class="a" style="left:270px;top:288px;width:12px;height:12px;background:#e5e6e9"></div>
<div class="a" style="left:282px;top:288px;width:12px;height:12px;background:#dfdfe1"></div>
<div class="a" style="left:294px;top:288px;width:12px;height:12px;background:#cfd0d2"></div>
<div class="a" style="left:306px;top:288px;width:12px;height:12px;background:#eff0f3"></div>
<div class="a" style="left:318px;top:288px;width:12px;height:12px;background:#f8f9fb"></div>
<div class="a" style="left:258px;top:300px;width:12px;height:12px;background:#d3cbbf"></div>
<div class="a" style="left:270px;top:300px;width:12px;height:12px;background:#e5e6e9"></div>
<div class="a" style="left:282px;top:300px;width:12px;height:12px;background:#c9cacf"></div>
<div class="a" style="left:294px;top:300px;width:12px;height:12px;background:#d1d2d6"></div>
<div class="a" style="left:306px;top:300px;width:12px;height:12px;background:#e6e7eb"></div>
<div class="a" style="left:318px;top:300px;width:12px;height:12px;background:#f5f6f9"></div>
<svg style="left:73px;top:336px" width="13" height="12" viewBox="0 0 13 12" fill="none" stroke="#60667c" stroke-width="1.4"><path d="M0 1h12.5M0 5.8h12.5M0 10.6h7.5"/></svg>
<div class="t" style="left:94px;top:335px;font-size:14px;color:#60667c"><i>涉</i><i>及</i><i>功</i><i>能</i></div>
<div class="t" style="left:254px;top:335px;font-size:14px;color:#1f2329"><i>问</i><i>题</i><i>反</i><i>馈</i></div>
<svg style="left:73px;top:378px" width="13" height="12" viewBox="0 0 13 12" fill="none" stroke="#60667c" stroke-width="1.4"><path d="M0 1h12.5M0 5.8h12.5M0 10.6h7.5"/></svg>
<div class="t" style="left:94px;top:377px;font-size:14px;color:#60667c"><i>反</i><i>馈</i><i>思</i><i>考</i></div>
<div class="a" style="left:254px;top:377px;width:440px;font-size:14px;line-height:18.2px;color:#1f2329;white-space:nowrap"><i>用</i><i>户</i><i>的</i><i>诉</i><i>求</i><i>是</i><i>希</i><i>望</i><i>在</i><i>系</i><i>统</i><i>中</i><i>集</i><i>成</i><i>一</i><i>个</i><i>内</i><i>置</i><i>的</i><i>问</i><i>题</i><i>反</i><i>馈</i><i>功</i><i>能</i><i>，</i><i>使</i><i>用</i><i>户</i><i>能</i><i>够</i><br><i>直</i><i>接</i><i>在</i><i>系</i><i>统</i><i>界</i><i>面</i><i>内</i><i>提</i><i>交</i><i>问</i><i>题</i><i>并</i><i>联</i><i>系</i><i>客</i><i>服</i><i>，</i><i>从</i><i>而</i><i>提</i><i>升</i><i>问</i><i>题</i><i>解</i><i>决</i><i>的</i><i>便</i><i>捷</i><i>性</i><i>、</i><br><i>效</i><i>率</i><i>和</i><i>用</i><i>户</i><i>体</i><i>验</i><i>，</i><i>避</i><i>免</i><i>依</i><i>赖</i><i>外</i><i>部</i><i>渠</i><i>道</i><i>（</i><i>如</i><i>电</i><i>话</i><i>或</i><i>邮</i><i>件</i><i>）</i><i>带</i><i>来</i><i>的</i><i>不</i><i>便</i><i>。</i></div>
<svg style="left:73px;top:455px" width="14" height="14" viewBox="0 0 14 14" fill="none" stroke="#60667c" stroke-width="1.4"><path d="M5.5 1.5h8.5M5.5 7h8.5M5.5 12.5h8.5"/><path d="M.5 1.3l1 1 2-2M.5 6.8l1 1 2-2M.5 12.3l1 1 2-2" stroke-width="1.2"/></svg>
<div class="t" style="left:94px;top:455px;font-size:14px;color:#60667c"><i>反</i><i>馈</i><i>类</i><i>型</i><i>（</i>AI<i>打</i><i>标</i><i>）</i></div>
<div class="a" style="left:254px;top:452px;width:97px;height:22px;border-radius:11px;background:#d7f0fd"></div>
<div class="t" style="left:263px;top:456px;font-size:13px;color:#245a7a"><i>功</i><i>能</i><i>完</i><i>善</i><i>度</i></div>
<svg style="left:333px;top:459px" width="8" height="8" viewBox="0 0 8 8" fill="none" stroke="#245a7a" stroke-width="1.2"><path d="M.3.3l7.4 7.4M7.7.3L.3 7.7"/></svg>
<div class="a" style="left:355px;top:452px;width:84px;height:22px;border-radius:11px;background:#dff3dc"></div>
<div class="t" style="left:364px;top:456px;font-size:13px;color:#1e5a27"><i>客</i><i>户</i><i>服</i><i>务</i></div>
<svg style="left:421px;top:459px" width="8" height="8" viewBox="0 0 8 8" fill="none" stroke="#1e5a27" stroke-width="1.2"><path d="M.3.3l7.4 7.4M7.7.3L.3 7.7"/></svg>
<svg style="left:72px;top:496px" width="15" height="15" viewBox="0 0 15 15" fill="none" stroke="#60667c" stroke-width="1.3"><circle cx="7.5" cy="7.5" r="6.8"/><path d="M4.7 6.3l2.8 2.8 2.8-2.8"/></svg>
<div class="t" style="left:94px;top:497px;font-size:14px;color:#60667c"><i>情</i><i>感</i><i>正</i><i>向</i><i>分</i><i>析</i></div>
<div class="a" style="left:254px;top:494px;width:97px;height:22px;border-radius:11px;background:#efe6fc"></div>
<div class="t" style="left:263px;top:498px;font-size:13px;color:#4a3a7a"><i>无</i><i>匹</i><i>配</i><i>类</i><i>别</i></div>
<svg style="left:333px;top:501px" width="8" height="8" viewBox="0 0 8 8" fill="none" stroke="#4a3a7a" stroke-width="1.2"><path d="M.3.3l7.4 7.4M7.7.3L.3 7.7"/></svg>
<svg style="left:73px;top:539px" width="14" height="15" viewBox="0 0 14 15" fill="none" stroke="#60667c" stroke-width="1.3"><circle cx="7" cy="5.2" r="3.3"/><path d="M1.2 14.4a5.8 4.9 0 0 1 11.6 0"/></svg>
<div class="t" style="left:94px;top:539px;font-size:14px;color:#60667c"><i>需</i><i>求</i><i>评</i><i>估</i><i>人</i></div>
<div class="t" style="left:254px;top:539px;font-size:14px;color:#bfc3cf"><i>请</i><i>选</i><i>择</i><i>成</i><i>员</i></div>
<svg style="left:72px;top:578px" width="15" height="15" viewBox="0 0 15 15" fill="none" stroke="#60667c" stroke-width="1.3"><circle cx="7.5" cy="7.5" r="6.8"/><path d="M4.7 6.3l2.8 2.8 2.8-2.8"/></svg>
<div class="t" style="left:94px;top:579px;font-size:14px;color:#60667c"><i>需</i><i>求</i><i>评</i><i>估</i><i>结</i><i>论</i></div>
<div class="t" style="left:254px;top:579px;font-size:14px;color:#bfc3cf"><i>请</i><i>从</i><i>下</i><i>拉</i><i>菜</i><i>单</i><i>中</i><i>选</i><i>择</i></div>
<svg style="left:72px;top:621px" width="16" height="15" viewBox="0 0 16 15" fill="none" stroke="#60667c" stroke-width="1.4" stroke-linejoin="round"><path d="M14 6V2a1 1 0 0 0-1-1H2a1 1 0 0 0-1 1v8a1 1 0 0 0 1 1h4"/><path d="M8.5 6.5l6 2.2-2.6.9-.9 2.6z" fill="#60667c"/></svg>
<div class="t" style="left:94px;top:621px;font-size:14px;color:#60667c"><i>和</i><i>用</i><i>户</i><i>建</i><i>立</i><i>沟</i><i>通</i></div>
<div class="a" style="left:253px;top:616px;width:68px;height:24px;border-radius:4px;background:#cacdd9"></div>
<div class="t" style="left:261px;top:621px;font-size:14px;color:#eef0f5"><i>联</i><i>系</i><i>用</i><i>户</i></div>
<svg style="left:73px;top:666px" width="13" height="13" viewBox="0 0 13 13" fill="none" stroke="#8a90a4" stroke-width="1.4"><path d="M6.5 0v13M0 6.5h13"/></svg>
<div class="t" style="left:94px;top:665px;font-size:14px;color:#8a90a4"><i>添</i><i>加</i><i>字</i><i>段</i></div>
<svg style="left:73px;top:712px" width="13" height="8" viewBox="0 0 13 8" fill="none" stroke="#8a90a4" stroke-width="1.4"><path d="M.7 7.3l5.8-5.8 5.8 5.8"/></svg>
<div class="t" style="left:94px;top:709px;font-size:14px;color:#8a90a4"><i>收</i><i>起</i></div>
<div class="a" style="left:64px;top:756px;width:645px;height:260px;border:1px dashed #d3d6de;border-radius:8px"></div>
<svg style="left:372px;top:916px" width="30" height="28" viewBox="0 0 30 28" fill="none" stroke="#c5c9d8" stroke-width="1.8" stroke-linejoin="round"><path d="M3 20.2L19.8 3.4a3.5 3.5 0 0 1 5 5L8 25H3z"/><path d="M18.6 4.8l3.8 3.8M15.8 24H28"/></svg>
<div class="a" style="left:773px;top:88px;width:7px;height:712px;border-radius:3.5px;background:#c8c8c9"></div>
<div class="a" style="left:770px;top:900px;width:12px;height:59px;border-radius:4px;background:#4b4f5b"></div>
<div class="a" style="left:774px;top:907px;width:5px;height:27px;background:repeating-linear-gradient(#2b2e35 0 1px,transparent 1px 2px)"></div>
<div class="a" style="left:774px;top:934px;width:5px;height:19px;background:repeating-linear-gradient(transparent 0 0px,transparent 0 0),linear-gradient(#b8e850,#4fe0c8);-webkit-mask:repeating-linear-gradient(#000 0 1px,transparent 1px 2px)"></div>
</div>
</body></html>
